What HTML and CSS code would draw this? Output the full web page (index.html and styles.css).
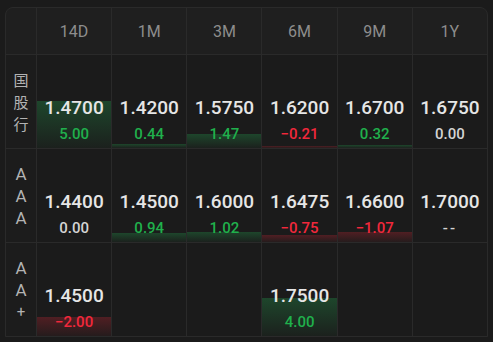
FILE: index.html
```html
<!DOCTYPE html>
<html lang="zh">
<head>
<meta charset="utf-8">
<link rel="stylesheet" href="styles.css">
</head>
<body>
<div class="table">
  <div class="head corner"></div>
  <div class="head">14D</div>
  <div class="head">1M</div>
  <div class="head">3M</div>
  <div class="head">6M</div>
  <div class="head">9M</div>
  <div class="head">1Y</div>

  <div class="label cjk"><span>国</span><span>股</span><span>行</span></div>
  <div class="cell"><span class="bar up" style="height:47px"></span><span class="val">1.4700</span><span class="chg up">5.00</span></div>
  <div class="cell"><span class="bar up" style="height:4px"></span><span class="val">1.4200</span><span class="chg up">0.44</span></div>
  <div class="cell"><span class="bar up" style="height:14px"></span><span class="val">1.5750</span><span class="chg up">1.47</span></div>
  <div class="cell"><span class="bar down" style="height:2px"></span><span class="val">1.6200</span><span class="chg down">−0.21</span></div>
  <div class="cell"><span class="bar up" style="height:3px"></span><span class="val">1.6700</span><span class="chg up">0.32</span></div>
  <div class="cell"><span class="val">1.6750</span><span class="chg flat">0.00</span></div>

  <div class="label"><span>A</span><span>A</span><span>A</span></div>
  <div class="cell"><span class="val">1.4400</span><span class="chg flat">0.00</span></div>
  <div class="cell"><span class="bar up" style="height:9px"></span><span class="val">1.4500</span><span class="chg up">0.94</span></div>
  <div class="cell"><span class="bar up" style="height:10px"></span><span class="val">1.6000</span><span class="chg up">1.02</span></div>
  <div class="cell"><span class="bar down" style="height:7px"></span><span class="val">1.6475</span><span class="chg down">−0.75</span></div>
  <div class="cell"><span class="bar down" style="height:10px"></span><span class="val">1.6600</span><span class="chg down">−1.07</span></div>
  <div class="cell"><span class="val">1.7000</span><span class="chg flat dash">--</span></div>

  <div class="label"><span>A</span><span>A</span><span class="plus">+</span></div>
  <div class="cell"><span class="bar down" style="height:19px"></span><span class="val">1.4500</span><span class="chg down">−2.00</span></div>
  <div class="cell"></div>
  <div class="cell"></div>
  <div class="cell"><span class="bar up" style="height:38px"></span><span class="val">1.7500</span><span class="chg up">4.00</span></div>
  <div class="cell"></div>
  <div class="cell"></div>
</div>
</body>
</html>
```

FILE: styles.css
```css
html, body {
  margin: 0;
  padding: 0;
  background: #1b1b1b;
  height: 342px;
  overflow: hidden;
}

body {
  padding: 7px 0 0 5px;
  box-sizing: border-box;
  font-family: Roboto, "Noto Sans CJK SC", sans-serif;
}

.table {
  width: 483px;
  display: grid;
  grid-template-columns: 30px repeat(6, 1fr);
  grid-template-rows: 46px 93px 93px 93px;
  gap: 1px;
  background: #2a2a2a;
  border: 1px solid #2a2a2a;
  border-radius: 8px 8px 0 0;
  box-sizing: border-box;
  overflow: hidden;
}

.head {
  background: #1f1f1f;
  color: #8d8d8d;
  font-size: 16px;
  display: flex;
  align-items: center;
  justify-content: center;
}

.label {
  background: #1c1c1c;
  color: #b3b3b3;
  font-family: Roboto, sans-serif;
  font-size: 17px;
  line-height: 22px;
  display: flex;
  flex-direction: column;
  align-items: center;
  justify-content: center;
}

.label.cjk {
  font-family: "Noto Sans CJK SC", sans-serif;
  font-size: 15px;
}

.label span {
  display: block;
}

.label .plus {
  font-size: 15px;
}

.cell {
  position: relative;
  background: #1b1b1b;
  display: flex;
  flex-direction: column;
  align-items: center;
  justify-content: flex-end;
  padding-bottom: 5px;
  box-sizing: border-box;
}

.bar {
  position: absolute;
  left: 0;
  right: 0;
  bottom: 0;
}

.bar.up {
  background: linear-gradient(to bottom, rgba(36, 170, 82, 0.3), rgba(36, 170, 82, 0.04));
}

.bar.down {
  background: linear-gradient(to bottom, rgba(225, 40, 56, 0.27), rgba(225, 40, 56, 0.05));
}

.val {
  position: relative;
  color: #e6e6e6;
  font-size: 19px;
  font-weight: 500;
  line-height: 22px;
}

.chg {
  position: relative;
  margin-top: 6px;
  font-size: 15px;
  font-weight: 500;
  line-height: 18px;
}

.chg.up { color: #20b04c; }
.chg.down { color: #f1283b; }
.chg.flat { color: #d4d4d4; }
.chg.dash { letter-spacing: 2px; }
```
